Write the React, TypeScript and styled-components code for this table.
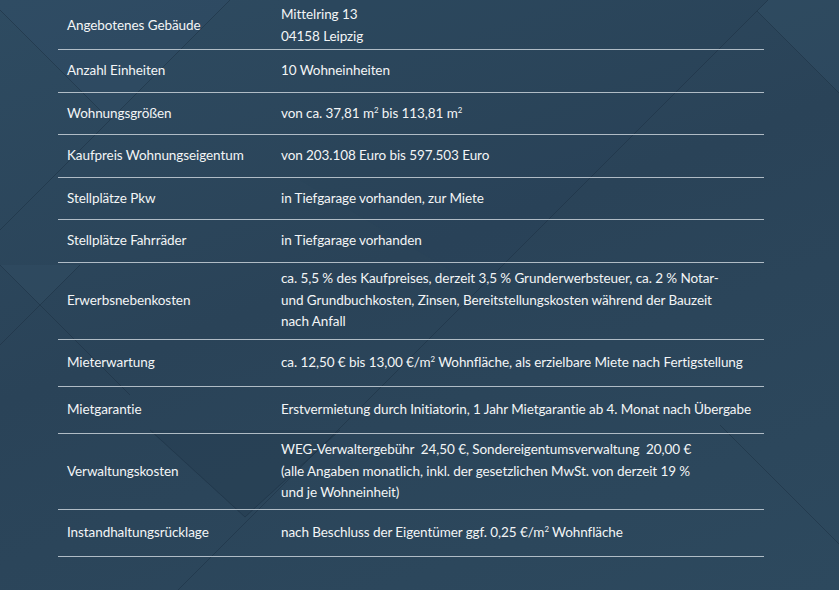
import * as React from 'react';
import styled, { createGlobalStyle } from 'styled-components';

interface Entry {
  label: string;
  value: React.ReactNode;
  padTop: number;
  padBottom: number;
}

const Sq = () => <Sup>2</Sup>;

// row paddings measured from the design (line-height 21.5, 1px rule below)
const entries: Entry[] = [
  {
    label: 'Angebotenes Gebäude',
    value: (
      <>
        Mittelring 13
        <br />
        04158 Leipzig
      </>
    ),
    padTop: 4,
    padBottom: 2,
  },
  { label: 'Anzahl Einheiten', value: '10 Wohneinheiten', padTop: 10, padBottom: 10 },
  {
    label: 'Wohnungsgrößen',
    value: (
      <>
        von ca. 37,81 m<Sq /> bis 113,81 m<Sq />
      </>
    ),
    padTop: 10,
    padBottom: 10,
  },
  {
    label: 'Kaufpreis Wohnungseigentum',
    value: 'von 203.108 Euro bis 597.503 Euro',
    padTop: 10,
    padBottom: 10,
  },
  {
    label: 'Stellplätze Pkw',
    value: 'in Tiefgarage vorhanden, zur Miete',
    padTop: 10,
    padBottom: 10,
  },
  {
    label: 'Stellplätze Fahrräder',
    value: 'in Tiefgarage vorhanden',
    padTop: 10,
    padBottom: 10,
  },
  {
    label: 'Erwerbsnebenkosten',
    value: (
      <>
        ca. 5,5 % des Kaufpreises, derzeit 3,5 % Grunderwerbsteuer, ca. 2 % Notar-
        <br />
        und Grundbuchkosten, Zinsen, Bereitstellungskosten während der Bauzeit
        <br />
        nach Anfall
      </>
    ),
    padTop: 5.75,
    padBottom: 5.75,
  },
  {
    label: 'Mieterwartung',
    value: (
      <>
        ca. 12,50 € bis 13,00 €/m<Sq /> Wohnfläche, als erzielbare Miete nach Fertigstellung
      </>
    ),
    padTop: 12.25,
    padBottom: 12.25,
  },
  {
    label: 'Mietgarantie',
    value: 'Erstvermietung durch Initiatorin, 1 Jahr Mietgarantie ab 4. Monat nach Übergabe',
    padTop: 12.25,
    padBottom: 12.25,
  },
  {
    label: 'Verwaltungskosten',
    value: (
      <>
        WEG-Verwaltergebühr{'\u00a0'} 24,50 €, Sondereigentumsverwaltung{'\u00a0'} 20,00 €
        <br />
        (alle Angaben monatlich, inkl. der gesetzlichen MwSt. von derzeit 19 %
        <br />
        und je Wohneinheit)
      </>
    ),
    padTop: 5.5,
    padBottom: 5.5,
  },
  {
    label: 'Instandhaltungsrücklage',
    value: (
      <>
        nach Beschluss der Eigentümer ggf. 0,25 €/m<Sq /> Wohnfläche
      </>
    ),
    padTop: 12.25,
    padBottom: 12.25,
  },
];

const pattern = `<svg xmlns='http://www.w3.org/2000/svg' width='839' height='590'>
<polygon points='768,0 839,0 839,93 757,11' fill='#35536a' fill-opacity='0.35'/>
<polygon points='0,0 230,0 110,120 0,10' fill='#33506a' fill-opacity='0.25'/>
<polygon points='150,430 245,517 340,430' fill='#223a4e' fill-opacity='0.35'/>
<polygon points='0,265 80,265 40,305' fill='#34526a' fill-opacity='0.3'/>
<polygon points='300,0 768,0 480,288 300,180' fill='#26405a' fill-opacity='0.18'/>
<g stroke='#1d3244' stroke-opacity='0.55' fill='none' stroke-width='1'>
<path d='M768 0 L178 590'/>
<path d='M757 11 L839 93'/>
<path d='M0 10 L110 120'/>
<path d='M0 265 L130 395'/>
<path d='M80 265 L0 345'/>
<path d='M150 430 L245 517 L340 430'/>
<path d='M720 425 L839 544'/>
<path d='M230 0 L0 230'/>
</g>
</svg>`;

const GlobalStyle = createGlobalStyle`
  html, body {
    margin: 0;
    padding: 0;
    background: #2c475b;
  }
  body {
    font-family: Lato, "Liberation Sans", sans-serif;
    -webkit-font-smoothing: antialiased;
  }
`;

const Page = styled.div`
  width: 839px;
  height: 590px;
  overflow: hidden;
  box-sizing: border-box;
  padding: 0 75px 0 58px;
  background-color: #2c475b;
  background-image:
    url("data:image/svg+xml,${encodeURIComponent(pattern)}"),
    linear-gradient(160deg, #2e4b61 0%, #2a4358 45%, #2d495e 100%);
  background-repeat: no-repeat;
`;

const Table = styled.div`
  display: grid;
  grid-template-columns: 214px 1fr;
`;

const Row = styled.div<{ $padTop: number; $padBottom: number }>`
  display: contents;

  & > div {
    padding-top: ${(p) => p.$padTop}px;
    padding-bottom: ${(p) => p.$padBottom}px;
    border-bottom: 1px solid rgba(214, 222, 228, 0.78);
  }
`;

const Cell = styled.div`
  display: flex;
  align-items: center;
  padding-left: 9px;
  padding-right: 9px;
  color: #f3f5f6;
  font-size: 13.5px;
  line-height: 21.5px;
  letter-spacing: -0.08px;
  white-space: nowrap;
`;

const ValueCell = styled(Cell)`
  display: block;
`;

const Sup = styled.sup`
  font-size: 0.58em;
  line-height: 0;
  vertical-align: 0.6em;
`;

const App = () => (
  <Page>
    <GlobalStyle />
    <Table>
      {entries.map((e) => (
        <Row key={e.label} $padTop={e.padTop} $padBottom={e.padBottom}>
          <Cell>{e.label}</Cell>
          <ValueCell>{e.value}</ValueCell>
        </Row>
      ))}
    </Table>
  </Page>
);

export default App;
